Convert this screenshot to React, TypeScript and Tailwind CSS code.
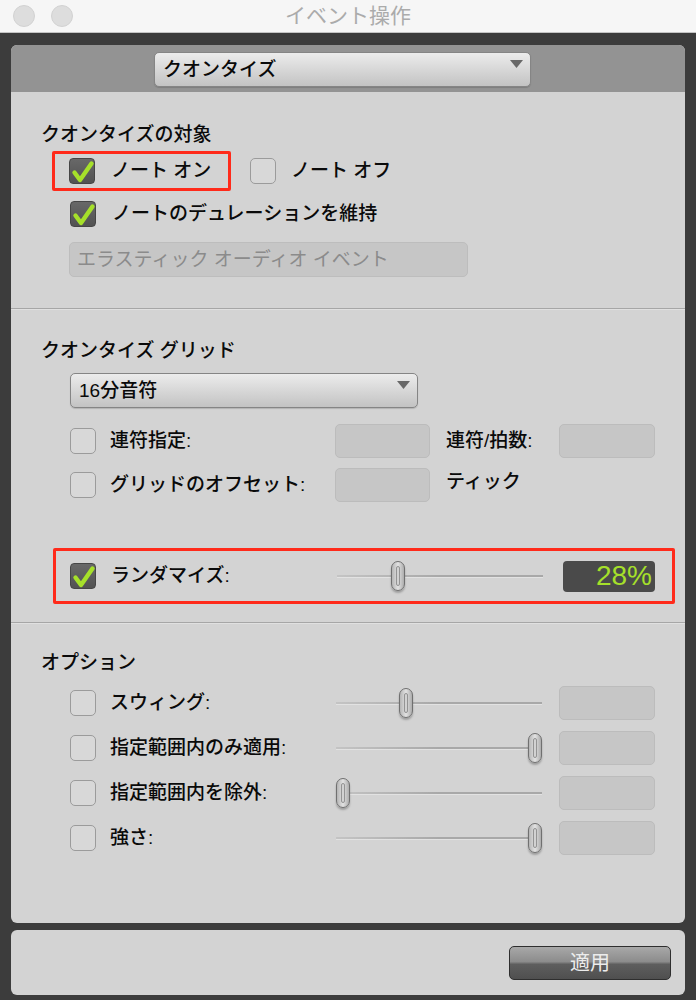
import React from 'react';

// Event Operations window – Quantize page

function Checkbox({ checked = false }: { checked?: boolean }) {
  if (checked) {
    return (
      <span className="relative block h-[26px] w-[26px] shrink-0 rounded-[4px] border border-[#464646] bg-linear-to-b from-[#686868] to-[#525252]">
        <svg className="absolute left-0 top-0" width="26" height="26" viewBox="0 0 26 26">
          <path
            d="M4.5 13.5 L10 21 L21.5 4.5"
            fill="none"
            stroke="#a6e02a"
            strokeWidth="4.4"
            strokeLinecap="round"
            strokeLinejoin="round"
          />
        </svg>
      </span>
    );
  }
  return <span className="block h-[26px] w-[26px] shrink-0 rounded-[5px] border-[1.5px] border-[#9b9b9b] bg-[#d8d8d8]" />;
}

function Field({ className = 'w-[96px]' }: { className?: string }) {
  return <span className={`block h-[34px] rounded-[5px] border border-[#bcbcbc] bg-[#c6c6c6] ${className}`} />;
}

function Dropdown({ label, width }: { label: string; width: string }) {
  return (
    <div
      className={`flex h-[35px] ${width} items-start justify-between rounded-[5px] border border-[#858585] bg-linear-to-b from-[#ececec] to-[#c3c3c3] shadow-[0_1px_1px_rgba(0,0,0,0.15)]`}
    >
      <span className="self-center pl-[8px] text-[19px] font-medium leading-[24px] text-[#0a0a0a]">{label}</span>
      <svg className="mr-[7px] mt-[7px]" width="13" height="8" viewBox="0 0 13 8">
        <path d="M0 0 H13 L6.5 8 Z" fill="#686868" />
      </svg>
    </div>
  );
}

// track runs 206px; thumb is 14px wide, value is 0..100
function Slider({ value }: { value: number }) {
  const left = Math.round((value / 100) * 192);
  return (
    <div className="relative h-[32px] w-[206px] shrink-0">
      <div className="absolute left-0 right-0 top-[15px] h-[2px] bg-linear-to-r from-[#c4c4c4] via-[#a8a8a8] to-[#a8a8a8]" />
      <div className="absolute left-0 right-0 top-[17px] h-px bg-[#e2e2e2]" />
      <div
        className="absolute top-[1px] flex h-[30px] w-[14px] justify-center rounded-[7px] border border-[#707070] bg-linear-to-r from-[#b5b5b5] via-[#e2e2e2] to-[#adadad] shadow-[0_2px_2px_rgba(0,0,0,0.25)]"
        style={{ left }}
      >
        <span className="mt-[4px] h-[20px] w-[4px] rounded-[2px] border border-[#949494] bg-[#d2d2d2]" />
      </div>
    </div>
  );
}

function Label({ className = '', children }: { className?: string; children: React.ReactNode }) {
  return <span className={`text-[19px] font-medium leading-[24px] text-[#0a0a0a] ${className}`}>{children}</span>;
}

function Heading({ children }: { children: React.ReactNode }) {
  return <div className="pl-[30px] text-[19px] font-medium leading-[24px] text-[#0a0a0a]">{children}</div>;
}

function Separator() {
  return (
    <div>
      <div className="h-px bg-[#a6a6a6]" />
      <div className="h-px bg-[#e0e0e0]" />
    </div>
  );
}

function OptionRow({ label, value }: { label: string; value: number }) {
  return (
    <div className="flex h-[45px] items-center pl-[59px]">
      <Checkbox />
      <Label className="ml-[14px] w-[226px]">{label}</Label>
      <Slider value={value} />
      <Field className="ml-[17px] w-[96px]" />
    </div>
  );
}

export default function App() {
  return (
    <div className="flex h-[1000px] w-[696px] flex-col bg-[#3c3c3c] font-['Liberation_Sans','Noto_Sans_CJK_JP',sans-serif]">
      {/* title bar */}
      <div className="grid h-[33px] shrink-0 grid-cols-[1fr_auto_1fr] items-center border-b border-[#c4c4c4] bg-[#f6f6f6]">
        <div className="flex gap-[16px] pl-[13px]">
          <span className="block h-[22px] w-[22px] rounded-full border border-[#d2d2d2] bg-[#dddddd]" />
          <span className="block h-[22px] w-[22px] rounded-full border border-[#d2d2d2] bg-[#dddddd]" />
        </div>
        <span className="text-[21px] leading-[26px] text-[#ababab]">イベント操作</span>
        <div />
      </div>

      {/* main panel */}
      <div className="mx-[11px] mt-[12px] flex h-[878px] flex-col overflow-hidden rounded-[6px] bg-[#d3d3d3]">
        <div className="h-[47px] shrink-0 bg-[#939393] pl-[143px] pt-[7px]">
          <Dropdown label="クオンタイズ" width="w-[377px]" />
        </div>

        {/* quantize targets */}
        <div className="pb-[31px] pt-[31px]">
          <Heading>クオンタイズの対象</Heading>
          <div className="mt-[4px] flex h-[40px] items-center pl-[41px]">
            <div className="flex h-[40px] w-[179px] items-center rounded-[2px] border-[3px] border-[#ff2a1a] pl-[14px]">
              <Checkbox checked />
              <Label className="ml-[16px]">ノート オン</Label>
            </div>
            <div className="ml-[19px] flex items-center">
              <Checkbox />
              <Label className="ml-[15px]">ノート オフ</Label>
            </div>
          </div>
          <div className="mt-[3px] flex h-[40px] items-center pl-[59px]">
            <Checkbox checked />
            <Label className="ml-[16px]">ノートのデュレーションを維持</Label>
          </div>
          <div className="ml-[58px] mt-[8px] flex h-[35px] w-[399px] items-center rounded-[5px] border border-[#bdbdbd] bg-[#c6c6c6] pl-[7px]">
            <span className="text-[19px] leading-[24px] text-[#8b8b8b]">エラスティック オーディオ イベント</span>
          </div>
        </div>
        <Separator />

        {/* quantize grid */}
        <div className="pb-[18px] pt-[29px]">
          <Heading>クオンタイズ グリッド</Heading>
          <div className="ml-[59px] mt-[10px]">
            <Dropdown label="16分音符" width="w-[348px]" />
          </div>
          <div className="mt-[16px] flex h-[34px] items-center pl-[59px]">
            <Checkbox />
            <Label className="ml-[14px] w-[225px]">連符指定:</Label>
            <Field className="w-[95px]" />
            <Label className="ml-[16px] w-[113px]">連符/拍数:</Label>
            <Field className="w-[96px]" />
          </div>
          <div className="mt-[10px] flex h-[34px] items-center pl-[59px]">
            <Checkbox />
            <Label className="ml-[14px] w-[225px]">グリッドのオフセット:</Label>
            <Field className="w-[95px]" />
            <Label className="ml-[16px] mt-[2px] self-start">ティック</Label>
          </div>
          <div className="ml-[42px] mt-[46px] flex h-[56px] w-[622px] items-center rounded-[2px] border-[3px] border-[#ff2a1a] pl-[14px]">
            <Checkbox checked />
            <Label className="ml-[15px] w-[226px]">ランダマイズ:</Label>
            <Slider value={28} />
            <div className="ml-[20px] flex h-[31px] w-[92px] items-center justify-end rounded-[4px] bg-[#4a4a4a] pr-[3px]">
              <span className="font-['Liberation_Sans',sans-serif] text-[28px] leading-[30px] text-[#a6e02a]">28%</span>
            </div>
          </div>
        </div>
        <Separator />

        {/* options */}
        <div className="pt-[27px]">
          <Heading>オプション</Heading>
          <div className="mt-[5px]">
            <OptionRow label="スウィング:" value={33} />
            <OptionRow label="指定範囲内のみ適用:" value={100} />
            <OptionRow label="指定範囲内を除外:" value={0} />
            <OptionRow label="強さ:" value={100} />
          </div>
        </div>
      </div>

      {/* footer */}
      <div className="mx-[11px] mt-[7px] flex h-[65px] justify-end rounded-[6px] bg-[#d3d3d3] pr-[14px] pt-[16px]">
        <button className="flex h-[34px] w-[162px] items-center justify-center rounded-[5px] border border-[#2e2e2e] bg-[linear-gradient(to_bottom,#a8a8a8_0%,#8c8c8c_46%,#5e5e5e_54%,#4f4f4f_100%)] text-[20px] leading-[24px] text-[#ececec]">
          適用
        </button>
      </div>
    </div>
  );
}
